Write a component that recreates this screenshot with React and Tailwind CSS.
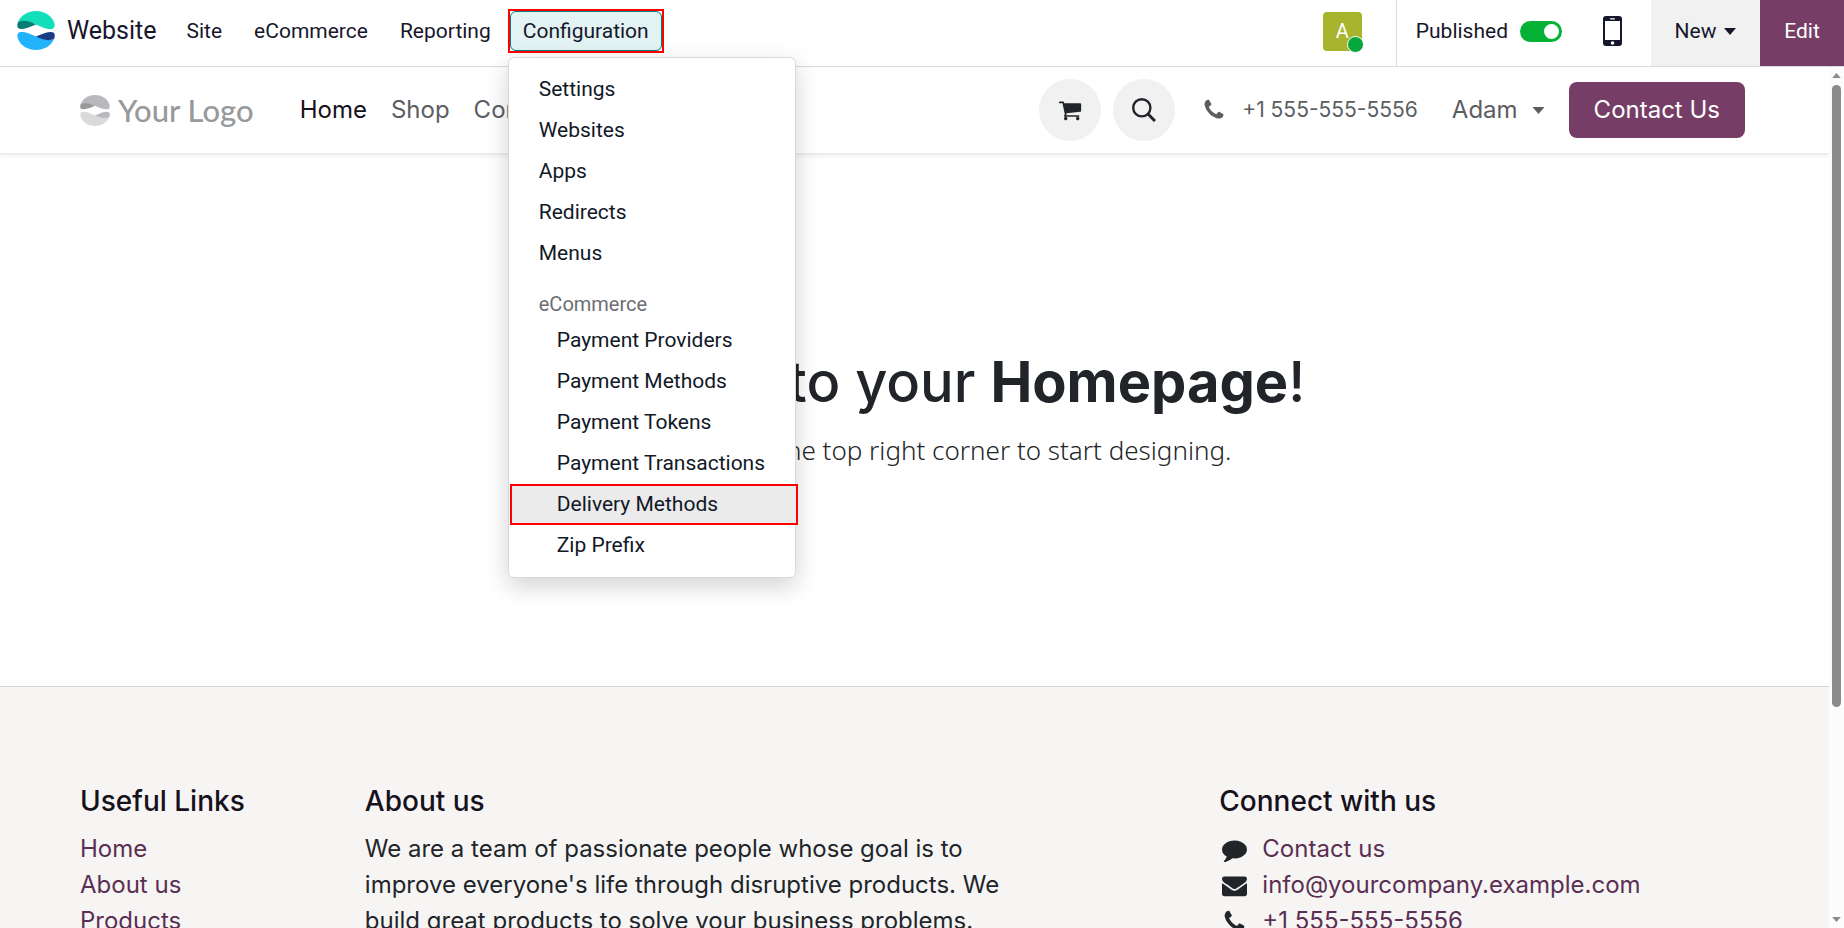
import React from "react";

const FA = {
  cart: "M704 1536q0 52-38 90t-90 38-90-38-38-90 38-90 90-38 90 38 38 90zm896 0q0 52-38 90t-90 38-90-38-38-90 38-90 90-38 90 38 38 90zm128-1088v512q0 24-16.5 42.5t-40.5 21.5l-1044 122q13 60 13 70 0 16-24 64h920q26 0 45 19t19 45-19 45-45 19h-1024q-26 0-45-19t-19-45q0-11 8-31.5t16-36 21.5-40 15.5-29.5l-177-823h-204q-26 0-45-19t-19-45 19-45 45-19h256q16 0 28.5 6.5t19.5 15.5 13 24.5 8 26 5.5 29.5 4.5 26h1201q26 0 45 19t19 45z",
  phone: "M1600 1240q0 27-10 70.5t-21 68.5q-21 50-122 106-94 51-186 51-27 0-53-3.5t-57.5-12.5-47-14.5-55.5-20.5-49-18q-98-35-175-83-127-79-264-216t-216-264q-48-77-83-175-3-9-18-49t-20.5-55.5-14.5-47-12.5-57.5-3.5-53q0-92 51-186 56-101 106-122 25-11 68.5-21t70.5-10q14 0 21 3 18 6 53 76 11 19 30 54t35 63.5 31 53.5q3 4 17.5 25t21.5 35.5 7 28.5q0 20-28.5 50t-62 55-62 53-28.5 46q0 9 5 22.5t8.5 20.5 14 24 11.5 19q76 137 174 235t235 174q2 1 19 11.5t24 14 20.5 8.5 22.5 5q18 0 46-28.5t53-62 55-62 50-28.5q14 0 28.5 7t35.5 21.5 25 17.5q25 15 53.5 31t63.5 35 54 30q70 35 76 53 3 7 3 21z",
  envelope: "M1792 710v794q0 66-47 113t-113 47h-1472q-66 0-113-47t-47-113v-794q44 49 101 87 362 246 497 345 57 42 92.5 65.5t94.5 48 110 24.5h2q51 0 110-24.5t94.5-48 92.5-65.5q170-123 498-345 57-39 100-87zm0-294q0 79-49 151t-122 123q-376 261-468 325-10 7-42.5 31t-54 38.5-52 32.5-57.5 27-50 9h-2q-23 0-50-9t-57.5-27-52-32.5-54-38.5-42.5-31q-91-64-262-182.5t-205-142.5q-62-42-117-115.5t-55-136.5q0-78 41.5-130t118.5-52h1472q65 0 112.5 47t47.5 113z",
  comment: "M1792 896q0 174-120 321.5t-326 233-450 85.5q-70 0-145-8-198 175-460 242-49 14-114 22-17 2-30.5-9t-17.5-29v-1q-3-4-.5-12t2-10 4.5-9.5l6-9 7-8.5 8-9q7-8 31-34.5t34.5-38 31-39.5 32.5-51 27-59 26-76q-157-89-247.5-220t-90.5-281q0-130 71-248.5t191-204.5 286-136.5 348-50.5q244 0 450 85.5t326 233 120 321.5z",
};

function Glyph({ name, className }) {
  return (
    <svg viewBox="0 0 1792 1792" fill="currentColor" aria-hidden="true" className={className}>
      <path d={FA[name]} />
    </svg>
  );
}

function WaveLogo({ colors, className }) {
  return (
    <svg viewBox="0 0 38 39" aria-hidden="true" className={className}>
      <path fill={colors[0]} d="M1 11C4 4 11 0 19 0s15 4 18 11c1.500 4 .5 7-3 7-6 0-9-2-15-4.500C13 11 6 9 1 11z" />
      <path fill={colors[1]} d="M1 11c6-2.500 12-.5 18 2.500C13 16 8 18 4 18c-4 0-4.500-3-3-7z" />
      <path fill={colors[2]} d="M37 28c-3 7-10 11-18 11S4 35 1 28c-1.500-4-.5-7 3-7 6 0 9 2 15 4.500C25 28 32 30 37 28z" />
      <path fill={colors[3]} d="M37 28c-6 2.500-12 .5-18-2.500C25 23 30 21 34 21c4 0 4.500 3 3 7z" />
    </svg>
  );
}

function Caret({ className }) {
  return (
    <svg viewBox="0 0 12 7" fill="currentColor" aria-hidden="true" className={className}>
      <path d="M0 0h12L6 7z" />
    </svg>
  );
}

const topMenus = ["Site", "eCommerce", "Reporting"];
const configItems = ["Settings", "Websites", "Apps", "Redirects", "Menus"];
const shopItems = [
  "Payment Providers",
  "Payment Methods",
  "Payment Tokens",
  "Payment Transactions",
  "Delivery Methods",
  "Zip Prefix",
];

function ConfigMenu() {
  return (
    <div
      role="menu"
      className="absolute -left-[2px] top-full z-20 mt-[6px] w-[288px] rounded-md border border-[#d8dadd] bg-white py-[11px] text-[#111827] shadow-[0_8px_24px_rgba(0,0,0,0.18)]"
    >
      {configItems.map((label) => (
        <a key={label} href="#" role="menuitem" className="block pl-[30px] leading-[41px]">
          {label}
        </a>
      ))}
      <div className="mt-[14px] pl-[30px] text-[20px] leading-[32px] text-[#6b6e76]">eCommerce</div>
      {shopItems.map((label) =>
        label === "Delivery Methods" ? (
          <a
            key={label}
            href="#"
            role="menuitem"
            className="-mr-[3px] ml-px block border-2 border-[#ff0000] bg-[#ebebeb] pl-[45px] leading-[37px]"
          >
            {label}
          </a>
        ) : (
          <a key={label} href="#" role="menuitem" className="block pl-[48px] leading-[41px]">
            {label}
          </a>
        )
      )}
    </div>
  );
}

function TopBar() {
  return (
    <header className="flex h-[67px] shrink-0 items-stretch justify-between border-b border-[#d8dadd] bg-white font-[Roboto,sans-serif] text-[21px] leading-[30px] text-[#17172b]">
      <nav className="flex items-center pb-[5px] pl-[17px]">
        <a href="#" className="flex items-center gap-[12px] text-[25px]">
          <WaveLogo colors={["#12dfba", "#077d74", "#21b4fd", "#1b3b84"]} className="h-[39px] w-[38px]" />
          Website
        </a>
        <div className="ml-[17px] flex items-center gap-[6px]">
          {topMenus.map((label) => (
            <button key={label} type="button" className="px-[13px]">
              {label}
            </button>
          ))}
          <div className="relative -ml-[2px] border-2 border-[#ff0000]">
            <button
              type="button"
              aria-expanded="true"
              className="block rounded-md border border-[#017e84] bg-[#e3f2f3] px-[12px] py-[4px]"
            >
              Configuration
            </button>
            <ConfigMenu />
          </div>
        </div>
      </nav>
      <div className="flex items-stretch">
        <div className="flex items-center border-r border-[#d8dadd] pb-[4px] pr-[34px]">
          <button
            type="button"
            className="relative flex h-[39px] w-[39px] items-center justify-center rounded bg-[#a8b42d] text-[20px] text-white"
          >
            A
            <span className="absolute -bottom-[2px] -right-[2px] h-[17px] w-[17px] rounded-full border border-white bg-[#08a73d]" />
          </button>
        </div>
        <div className="flex items-center pb-[4px] pl-[19px] pr-[29px]">
          <label className="flex items-center gap-[12px]">
            Published
            <input type="checkbox" defaultChecked className="peer sr-only" />
            <span className="flex h-[21px] w-[42px] items-center justify-end rounded-full bg-[#05b135] pr-[3px]">
              <span className="h-[15px] w-[15px] rounded-full bg-white" />
            </span>
          </label>
          <button type="button" aria-label="Mobile preview" className="ml-[41px]">
            <svg viewBox="0 0 19 30" className="h-[30px] w-[19px]" aria-hidden="true">
              <rect width="19" height="30" rx="3" fill="#17172b" />
              <rect x="2" y="5" width="15" height="19" fill="#fff" />
              <rect x="7" y="2.200" width="5" height="1.200" rx=".6" fill="#fff" />
              <circle cx="9.500" cy="27" r="1.800" fill="#fff" />
            </svg>
          </button>
        </div>
        <button type="button" className="flex w-[109px] items-center justify-center gap-[8px] bg-[#f1f1f1] pb-[4px]">
          New
          <Caret className="h-[7px] w-[12px]" />
        </button>
        <button type="button" className="w-[84px] bg-[#763e66] pb-[4px] text-white">
          Edit
        </button>
      </div>
    </header>
  );
}

function SiteHeader() {
  return (
    <div className="flex h-[87px] shrink-0 items-center justify-between border-b border-[#e9e9e9] pl-20 pr-[84px] text-[24px] text-[#5c5d61] shadow-[0_2px_4px_rgba(0,0,0,0.07)]">
      <div className="flex items-center">
        <a href="#" className="flex items-center gap-[8px] font-[Lato,sans-serif] text-[31px] font-medium leading-[44px] text-[#98999b]">
          <WaveLogo colors={["#b8b9bd", "#98999b", "#d9dadc", "#b8b9bd"]} className="h-[31px] w-[30px]" />
          Your Logo
        </a>
        <nav className="ml-[46px] flex gap-[24px]">
          <a href="#" className="text-[#17111c]">Home</a>
          <a href="#">Shop</a>
          <a href="#">Contact us</a>
        </nav>
      </div>
      <div className="flex items-center">
        <button type="button" aria-label="Cart" className="flex h-[62px] w-[62px] items-center justify-center rounded-full bg-[#f1f1f1] text-[#212529]">
          <Glyph name="cart" className="h-[24px] w-[24px]" />
        </button>
        <button type="button" aria-label="Search" className="ml-[12px] flex h-[62px] w-[62px] items-center justify-center rounded-full bg-[#f1f1f1] text-[#212529]">
          <svg viewBox="0 0 24 24" fill="none" stroke="currentColor" className="h-[24px] w-[24px]" aria-hidden="true">
            <circle cx="9.800" cy="9.800" r="8.600" strokeWidth="2.400" />
            <path d="M16 16l7 7" strokeWidth="3" />
          </svg>
        </button>
        <a href="#" className="ml-[27px] flex items-center gap-[16px] text-[21px]">
          <Glyph name="phone" className="h-[24px] w-[24px]" />
          +1 555-555-5556
        </a>
        <button type="button" className="ml-[34px] flex items-center gap-[14px]">
          Adam
          <Caret className="h-[7px] w-[13px]" />
        </button>
        <a href="#" className="ml-[24px] rounded-lg bg-[#763e66] px-[25px] py-[10px] leading-[36px] text-white">
          Contact Us
        </a>
      </div>
    </div>
  );
}

const connect = [
  ["comment", "Contact us"],
  ["envelope", "info@yourcompany.example.com"],
  ["phone", "+1 555-555-5556"],
];

function Footer() {
  return (
    <footer className="grid shrink-0 grid-cols-12 border-t border-[#d5d5d5] bg-[#f6f5f4] pb-20 pl-20 pr-[40px] pt-[96px] text-[24px] leading-[36px] text-[#212529]">
      <section className="col-span-2">
        <h5 className="mb-[12px] text-[28px] font-medium text-[#17111c]">Useful Links</h5>
        <ul className="text-[#5b2f52]">
          {["Home", "About us", "Products"].map((t) => (
            <li key={t}>
              <a href="#">{t}</a>
            </li>
          ))}
        </ul>
      </section>
      <section className="col-span-5 pr-10">
        <h5 className="mb-[12px] text-[28px] font-medium text-[#17111c]">About us</h5>
        <p>
          We are a team of passionate people whose goal is to improve everyone's life through disruptive products. We
          build great products to solve your business problems.
        </p>
      </section>
      <section className="col-span-4 col-start-9">
        <h5 className="mb-[12px] text-[28px] font-medium text-[#17111c]">Connect with us</h5>
        <ul className="text-[#5b2f52]">
          {connect.map(([icon, t]) => (
            <li key={t} className="flex items-center gap-[15px] pl-[3px]">
              <Glyph name={icon} className="h-[25px] w-[25px] text-[#212529]" />
              <a href="#">{t}</a>
            </li>
          ))}
        </ul>
      </section>
    </footer>
  );
}

export default function App() {
  return (
    <div className="flex h-screen flex-col overflow-hidden bg-white font-[Inter,sans-serif]">
      <TopBar />
      <div className="flex min-h-0 flex-1">
        <div className="flex min-w-0 flex-1 flex-col overflow-hidden">
          <SiteHeader />
          <main className="flex h-[532px] shrink-0 flex-col items-center justify-center pb-6 text-[#212529]">
            <h1 className="text-[56px] font-medium leading-[70px]">
              Welcome to your <b className="font-bold">Homepage</b>!
            </h1>
            <p className="mt-[14px] font-['Noto_Sans',sans-serif] text-[26px] font-light leading-[38px]">
              Click on <b>Edit</b> in the top right corner to start designing.
            </p>
          </main>
          <Footer />
        </div>
        <div aria-hidden="true" className="flex w-[15px] flex-col items-center justify-between bg-[#fcfcfc] py-[6px] text-[#8b8b8b]">
          <Caret className="h-[5px] w-[9px] rotate-180" />
          <div className="mb-auto mt-[7px] h-[622px] w-[9px] rounded-full bg-[#8b8b8b]" />
          <Caret className="h-[5px] w-[9px]" />
        </div>
      </div>
    </div>
  );
}
